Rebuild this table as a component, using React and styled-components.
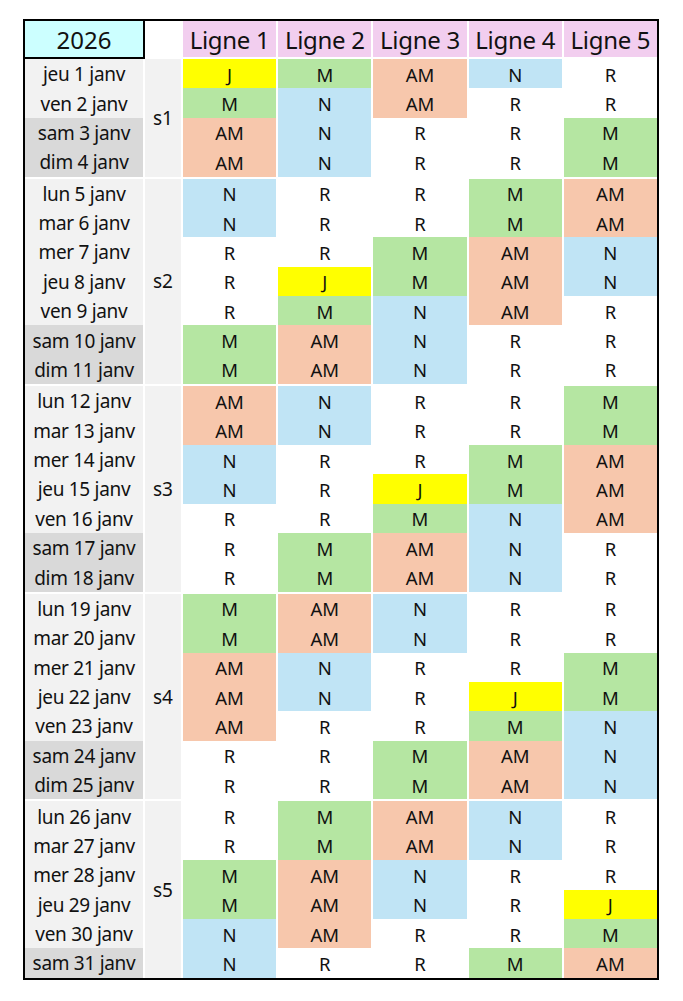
import React from "react";
import styled, { createGlobalStyle } from "styled-components";

const GlobalStyle = createGlobalStyle`
  html, body { margin: 0; padding: 0; background: #ffffff; }
  body { font-family: "Noto Sans", "Open Sans", sans-serif; color: #111111; }
`;

const COLORS = {
  J: "#ffff00",
  M: "#b5e6a2",
  AM: "#f7c7ac",
  N: "#c0e4f5",
  R: "#ffffff",
};

const COLS = "118px 36px repeat(5, 1fr)";

const Frame = styled.div`
  margin: 19px 0 0 23px;
  width: 632px;
  border: 2px solid #000;
  background: #ffffff;
`;

const HeaderRow = styled.div`
  display: grid;
  grid-template-columns: ${COLS};
  column-gap: 2px;
  height: 38px;
`;

const YearCell = styled.div`
  margin-right: -2px;
  background: #ccffff;
  border-right: 2px solid #000;
  border-bottom: 2px solid #000;
  display: flex;
  align-items: center;
  justify-content: center;
  font-size: 24px;
`;

const BlankHead = styled.div``;

const LineHead = styled.div`
  margin-bottom: 2px;
  background: #f2ceef;
  display: flex;
  align-items: center;
  justify-content: center;
  font-size: 24px;
  letter-spacing: -0.3px;
`;

const WeekBlock = styled.div`
  display: grid;
  grid-template-columns: ${COLS};
  grid-auto-rows: 29.39px;
  column-gap: 2px;
  & + & { margin-top: 2px; }
`;

const DateCell = styled.div`
  grid-column: 1;
  background: ${(p) => (p.$weekend ? "#d9d9d9" : "#f2f2f2")};
  display: flex;
  align-items: center;
  justify-content: center;
  padding-top: 1px;
  font-size: 19px;
  letter-spacing: -0.3px;
`;

const WeekCell = styled.div`
  grid-column: 2;
  grid-row: 1 / span ${(p) => p.$span};
  background: #f2f2f2;
  display: flex;
  align-items: center;
  justify-content: center;
  font-size: 19px;
`;

const ShiftCell = styled.div`
  background: ${(p) => COLORS[p.$code]};
  display: flex;
  align-items: center;
  justify-content: center;
  padding-top: 1px;
  font-size: 18.5px;
`;

const DAYS = ["dim", "lun", "mar", "mer", "jeu", "ven", "sam"];

const DATA = [
  ["J", "M", "AM", "N", "R"],
  ["M", "N", "AM", "R", "R"],
  ["AM", "N", "R", "R", "M"],
  ["AM", "N", "R", "R", "M"],
  ["N", "R", "R", "M", "AM"],
  ["N", "R", "R", "M", "AM"],
  ["R", "R", "M", "AM", "N"],
  ["R", "J", "M", "AM", "N"],
  ["R", "M", "N", "AM", "R"],
  ["M", "AM", "N", "R", "R"],
  ["M", "AM", "N", "R", "R"],
  ["AM", "N", "R", "R", "M"],
  ["AM", "N", "R", "R", "M"],
  ["N", "R", "R", "M", "AM"],
  ["N", "R", "J", "M", "AM"],
  ["R", "R", "M", "N", "AM"],
  ["R", "M", "AM", "N", "R"],
  ["R", "M", "AM", "N", "R"],
  ["M", "AM", "N", "R", "R"],
  ["M", "AM", "N", "R", "R"],
  ["AM", "N", "R", "R", "M"],
  ["AM", "N", "R", "J", "M"],
  ["AM", "R", "R", "M", "N"],
  ["R", "R", "M", "AM", "N"],
  ["R", "R", "M", "AM", "N"],
  ["R", "M", "AM", "N", "R"],
  ["R", "M", "AM", "N", "R"],
  ["M", "AM", "N", "R", "R"],
  ["M", "AM", "N", "R", "J"],
  ["N", "AM", "R", "R", "M"],
  ["N", "R", "R", "M", "AM"],
];

const WEEKS = [
  { label: "s1", from: 1, to: 4 },
  { label: "s2", from: 5, to: 11 },
  { label: "s3", from: 12, to: 18 },
  { label: "s4", from: 19, to: 25 },
  { label: "s5", from: 26, to: 31 },
];

// 1 Jan 2026 is a Thursday (index 4)
const dayIndex = (d) => (4 + d - 1) % 7;

export default function App() {
  return (
    <>
      <GlobalStyle />
      <Frame>
        <HeaderRow>
          <YearCell>2026</YearCell>
          <BlankHead />
          {[1, 2, 3, 4, 5].map((n) => (
            <LineHead key={n}>Ligne {n}</LineHead>
          ))}
        </HeaderRow>
        {WEEKS.map((w) => {
          const span = w.to - w.from + 1;
          const days = [];
          for (let d = w.from; d <= w.to; d++) days.push(d);
          return (
            <WeekBlock key={w.label}>
              <WeekCell $span={span}>{w.label}</WeekCell>
              {days.map((d, i) => {
                const di = dayIndex(d);
                const weekend = di === 0 || di === 6;
                return (
                  <React.Fragment key={d}>
                    <DateCell $weekend={weekend} style={{ gridRow: i + 1 }}>
                      {DAYS[di]} {d} janv
                    </DateCell>
                    {DATA[d - 1].map((c, k) => (
                      <ShiftCell key={k} $code={c}>
                        {c}
                      </ShiftCell>
                    ))}
                  </React.Fragment>
                );
              })}
            </WeekBlock>
          );
        })}
      </Frame>
    </>
  );
}
